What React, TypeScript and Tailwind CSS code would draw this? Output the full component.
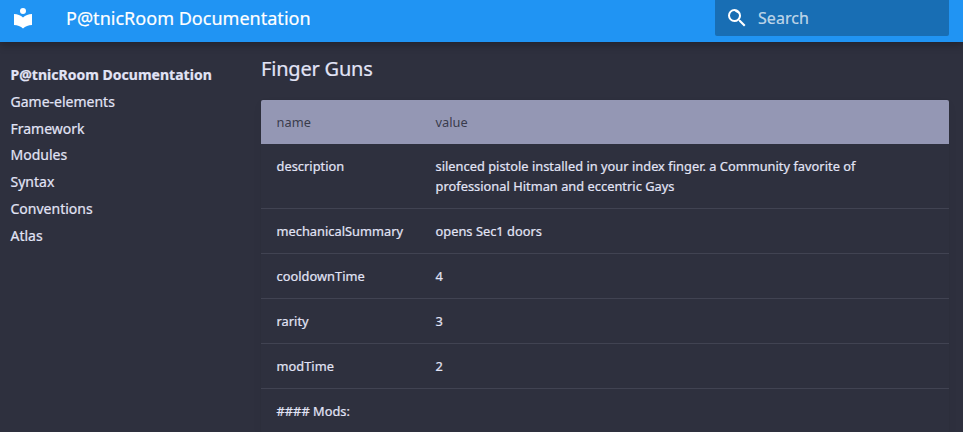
const navItems = ["Game-elements", "Framework", "Modules", "Syntax", "Conventions", "Atlas"];

const rows: [string, string][] = [
  ["description", "silenced pistole installed in your index finger. a Community favorite of professional Hitman and eccentric Gays"],
  ["mechanicalSummary", "opens Sec1 doors"],
  ["cooldownTime", "4"],
  ["rarity", "3"],
  ["modTime", "2"],
  ["#### Mods:", ""],
];

function Header() {
  return (
    <header className="relative z-10 flex h-[42px] shrink-0 items-start bg-[#2094f3] pl-[11px] pr-[14px] text-white shadow-[0_0_4px_rgba(0,0,0,0.1),0_4px_8px_rgba(0,0,0,0.2)]">
      <svg viewBox="0 0 24 24" className="mt-[6px] size-6 shrink-0 fill-current">
        <path d="M12 8a3 3 0 0 0 3-3 3 3 0 0 0-3-3 3 3 0 0 0-3 3 3 3 0 0 0 3 3m0 3.54C9.64 9.35 6.5 8 3 8v11c3.5 0 6.64 1.35 9 3.54 2.36-2.19 5.5-3.54 9-3.54V8c-3.5 0-6.64 1.35-9 3.54Z" />
      </svg>
      <div className="ml-[31px] grow text-[18px] leading-[36px] tracking-[0.02px]">P@tnicRoom Documentation</div>
      <div className="flex h-9 w-[234px] items-center rounded-b-[2px] bg-[#186eb4] pl-[10px]">
        <svg viewBox="0 0 24 24" className="size-6 fill-current">
          <path d="M9.5 3A6.5 6.5 0 0 1 16 9.5c0 1.61-.59 3.09-1.56 4.23l.27.27h.79l5 5-1.5 1.5-5-5v-.79l-.27-.27A6.516 6.516 0 0 1 9.5 16 6.5 6.5 0 0 1 3 9.5 6.5 6.5 0 0 1 9.5 3m0 2C7 5 5 7 5 9.5S7 14 9.5 14 14 12 14 9.5 12 7 9.5 5Z" />
        </svg>
        <span className="ml-[9px] text-[16px] leading-[36px] tracking-[0.04px] text-white/70">Search</span>
      </div>
    </header>
  );
}

export default function App() {
  return (
    <div className="flex h-[432px] w-[963px] flex-col overflow-hidden bg-[#2e303e] font-['Noto_Sans',sans-serif] text-[#e2e4f6] [-webkit-text-stroke:0.2px_currentColor]">
      <Header />
      <div className="flex min-h-0 grow">
        <nav className="w-[261px] shrink-0 pl-[10.5px] pt-[24px] text-[14px] leading-[18px]">
          <div className="mb-[8.8px] font-bold tracking-[0.02px]">P@tnicRoom Documentation</div>
          <ul className="flex flex-col gap-[8.8px]">
            {navItems.map((item) => (
              <li key={item}>{item}</li>
            ))}
          </ul>
        </nav>
        <main className="w-[688px] shrink-0 pt-[12px]">
          <h3 className="mb-[16px] text-[20px] leading-[30px] tracking-[-0.2px]">Finger Guns</h3>
          <div className="overflow-hidden rounded-[2px] text-[12.8px] leading-5 tracking-[0.03px] shadow-[0_4px_10px_rgba(0,0,0,0.05),0_0_1px_rgba(0,0,0,0.1)]">
            <div className="flex h-11 items-center bg-[#9497b4] pl-[15.5px] text-[#2e303e]/90 [-webkit-text-stroke:0px]">
              <div className="w-[159px]">name</div>
              <div>value</div>
            </div>
            {rows.map(([name, value], i) => (
              <div key={name} className={`flex pl-[15.5px] pb-3 ${i ? "border-t border-[#414352] pt-3" : "pt-[12px]"}`}>
                <div className="w-[159px] shrink-0">{name}</div>
                <div className="w-[440px]">{value}</div>
              </div>
            ))}
          </div>
        </main>
      </div>
    </div>
  );
}
